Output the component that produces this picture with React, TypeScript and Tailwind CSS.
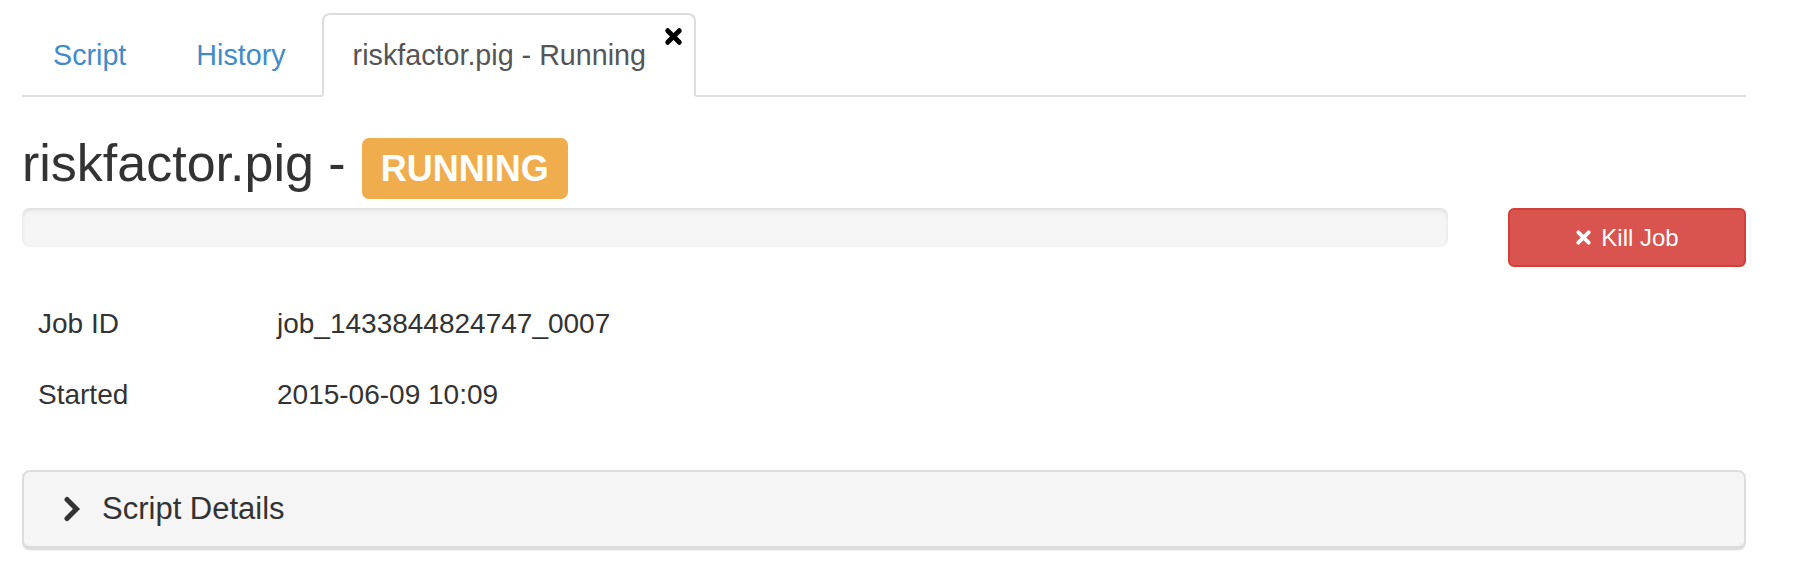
import React from 'react'

const FONT = { fontFamily: '"Liberation Sans", Arial, Helvetica, sans-serif' }

function TimesIcon({ size, stroke, className }: { size: number; stroke: number; className?: string }) {
  return (
    <svg width={size} height={size} viewBox="0 0 18 18" className={className}>
      <path d="M3.5 3.5 L14.5 14.5 M14.5 3.5 L3.5 14.5" stroke="currentColor" strokeWidth={stroke} strokeLinecap="round" fill="none" />
    </svg>
  )
}

function ChevronRight() {
  return (
    <svg width="18" height="26" viewBox="0 0 18 26">
      <path d="M4 3.5 L13.5 13 L4 22.5" stroke="#333" strokeWidth="5" strokeLinecap="round" strokeLinejoin="miter" fill="none" />
    </svg>
  )
}

export default function App() {
  const rows = [
    { label: 'Job ID', value: 'job_1433844824747_0007' },
    { label: 'Started', value: '2015-06-09 10:09' },
  ]

  return (
    <div className="w-[1802px] h-[582px] bg-white pl-[22px] pr-[56px] pt-[13px] text-[#333]" style={FONT}>
      {/* Tabs */}
      <ul className="flex border-b-2 border-[#ddd]">
        <li className="-mb-[2px] mr-[8px]">
          <a className="block border-2 border-transparent px-[29px] py-[20px] text-[28.7px] leading-[40px] text-[#428bca]">Script</a>
        </li>
        <li className="-mb-[2px] mr-[5px]">
          <a className="block border-2 border-transparent px-[29px] py-[20px] text-[28.7px] leading-[40px] text-[#428bca]">History</a>
        </li>
        <li className="-mb-[2px] relative">
          <a className="block rounded-t-[8px] border-2 border-[#ddd] border-b-white bg-white pl-[29px] pr-[48px] py-[20px] text-[28.7px] leading-[40px] text-[#555]">
            riskfactor.pig - Running
          </a>
          <TimesIcon size={19} stroke={4.6} className="absolute right-[13px] top-[14px] text-black" />
        </li>
      </ul>

      {/* Heading */}
      <div className="mt-[38px] flex items-baseline">
        <h1 className="text-[52px] leading-[57px] font-normal">riskfactor.pig -</h1>
        <span className="ml-[16px] rounded-[7px] bg-[#f0ad4e] px-[19px] pt-[13px] pb-[12px] text-[36px] font-bold leading-[36px] text-white">
          RUNNING
        </span>
      </div>

      {/* Progress + kill */}
      <div className="mt-[9px] flex items-start gap-[60px]">
        <div className="h-[39px] flex-1 rounded-[8px] bg-[#f5f5f5] shadow-[inset_0_2px_4px_rgba(0,0,0,0.1)]" />
        <button className="flex h-[59px] w-[238px] items-center justify-center gap-[9px] rounded-[6px] border-2 border-[#d43f3a] bg-[#d9534f] text-[24px] text-white">
          <TimesIcon size={17} stroke={4} />
          <span>Kill Job</span>
        </button>
      </div>

      {/* Details table */}
      <div className="mt-[21px] grid grid-cols-[239px_1fr] text-[28px] leading-[40px]">
        {rows.map((r) => (
          <React.Fragment key={r.label}>
            <div className="py-[15.5px] pl-[16px]">{r.label}</div>
            <div className="py-[15.5px] pl-[16px]">{r.value}</div>
          </React.Fragment>
        ))}
      </div>

      {/* Script details panel */}
      <div className="mt-[40px] flex items-center rounded-[8px] border-2 border-b-4 border-[#ddd] bg-[#f5f5f5] py-[15px] pl-[39px] shadow-[0_1px_2px_rgba(0,0,0,0.05)]">
        <ChevronRight />
        <span className="ml-[21px] text-[31px] leading-[44px] text-[#333]">Script Details</span>
      </div>
    </div>
  )
}
